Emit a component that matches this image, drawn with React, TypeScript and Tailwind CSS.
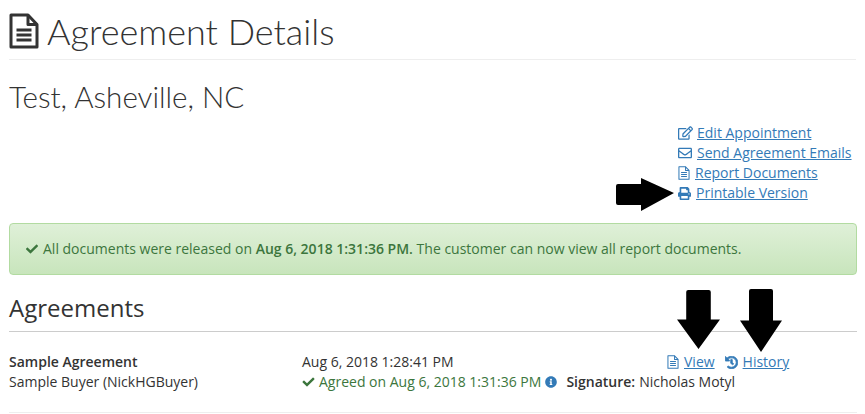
import { FaCheck, FaHistory, FaInfoCircle, FaPrint, FaRegEdit, FaRegEnvelope } from "react-icons/fa";

/** Outline page with folded corner and text lines (viewBox is 30x36 for both sizes). */
function FileIcon({ className, weight }: { className: string; weight: number }) {
  return (
    <svg viewBox="0 0 30 36" fill="none" stroke="currentColor" strokeWidth={weight} className={className}>
      <path d="M2 2h17l9 9.5V34H2z" strokeLinejoin="round" />
      <path d="M19 2v9.5h9" strokeLinejoin="round" />
      <path d="M7.5 17h15M7.5 22h15M7.5 27h15" />
    </svg>
  );
}

const LINKS = [
  { label: "Edit Appointment", icon: <FaRegEdit className="h-[14px] w-[15px] shrink-0" />, gap: "ml-1" },
  { label: "Send Agreement Emails", icon: <FaRegEnvelope className="h-[14px] w-[14px] shrink-0" />, gap: "ml-[5px]" },
  { label: "Report Documents", icon: <FileIcon weight={2.6} className="h-[14px] w-[12px] shrink-0" />, gap: "ml-[5px]" },
  { label: "Printable Version", icon: <FaPrint className="h-[13px] w-[13px] shrink-0" />, gap: "ml-[5px]" },
];

/** Hand-drawn black annotation arrows that sit on top of the page. */
function ArrowRight({ className }: { className: string }) {
  return (
    <svg viewBox="0 0 58 33" className={className}>
      <path d="M2 6h23V0l33 15-33 18v-6H2a2 2 0 0 1-2-2V8a2 2 0 0 1 2-2z" fill="#000" />
    </svg>
  );
}

function ArrowDown({ className }: { className: string }) {
  return (
    <svg viewBox="0 0 42 62" preserveAspectRatio="none" className={className}>
      <path d="M11 0h20a2 2 0 0 1 2 2v29h9L21 62 0 31h9V2a2 2 0 0 1 2-2z" fill="#000" />
    </svg>
  );
}

export default function App() {
  return (
    <div className="relative h-[414px] w-[865px] overflow-hidden bg-white px-[9px] font-['Open_Sans',sans-serif] text-[14px] leading-[20px] text-[#333]">
      {/* === Page header === */}
      <div className="flex h-[60px] items-center border-b border-[#eee] pt-[2px]">
        <FileIcon weight={3} className="h-[36px] w-[30px] shrink-0 text-[#333]" />
        <h1 className="ml-[8px] font-['Lato',sans-serif] text-[36px] leading-[40px] font-light text-[#333]">
          Agreement Details
        </h1>
      </div>
      <h2 className="mt-[19px] font-['Lato',sans-serif] text-[29.6px] leading-[36px] font-light text-[#333]">
        Test, Asheville, NC
      </h2>

      {/* Action links */}
      <div className="mt-[8px] flex flex-col pl-[669px] text-[#337ab7]">
        {LINKS.map((l) => (
          <div key={l.label} className="flex h-[20px] items-center">
            {l.icon}
            <a href="#" className={`${l.gap} underline`}>
              {l.label}
            </a>
          </div>
        ))}
      </div>

      {/* Alert */}
      <div className="mt-[20px] flex h-[52px] w-[848px] items-center rounded border border-[#b2dba1] bg-gradient-to-b from-[#dff0d8] to-[#c8e5bc] pl-[16px] text-[#3c763d]">
        <FaCheck className="mr-[5px] h-[12px] w-[12px] shrink-0" />
        <span>
          All documents were released on <b className="font-semibold">Aug 6, 2018 1:31:36 PM.</b> The customer can now
          view all report documents.
        </span>
      </div>

      {/* === Agreements === */}
      <h3 className="mt-[20px] w-[848px] border-b border-[#ccc] pb-[10px] text-[24px] leading-[26px] text-[#333]">
        Agreements
      </h3>
      <div className="flex h-[81px] w-[848px] border-b border-[#eee] pt-[20px]">
        <div className="w-[293px]">
          <div className="font-semibold">Sample Agreement</div>
          <div>Sample Buyer (NickHGBuyer)</div>
        </div>
        <div className="w-[365px]">
          <div>Aug 6, 2018 1:28:41 PM</div>
          <div className="flex items-center whitespace-nowrap">
            <FaCheck className="mr-[4px] h-[12px] w-[13px] shrink-0 text-[#3c763d]" />
            <span className="text-[#3c763d]">Agreed on Aug 6, 2018 1:31:36 PM</span>
            <FaInfoCircle className="ml-[4px] h-[12px] w-[12px] shrink-0 text-[#337ab7]" />
            <span className="ml-[9px] font-semibold">Signature:</span>
            <span className="ml-1">Nicholas Motyl</span>
          </div>
        </div>
        <div className="flex h-[20px] items-center text-[#337ab7]">
          <FileIcon weight={2.6} className="h-[14px] w-[12px] shrink-0" />
          <a href="#" className="ml-[5px] underline">
            View
          </a>
          <FaHistory stroke="currentColor" strokeWidth={30} className="ml-[10px] h-[13px] w-[13px] shrink-0" />
          <a href="#" className="ml-[5px] underline">
            History
          </a>
        </div>
      </div>

      {/* Annotation arrows */}
      <ArrowRight className="absolute top-[178px] left-[616px] h-[33px] w-[58px]" />
      <ArrowDown className="absolute top-[290px] left-[677px] h-[59px] w-[43px]" />
      <ArrowDown className="absolute top-[289px] left-[740px] h-[63px] w-[42px]" />
    </div>
  );
}
